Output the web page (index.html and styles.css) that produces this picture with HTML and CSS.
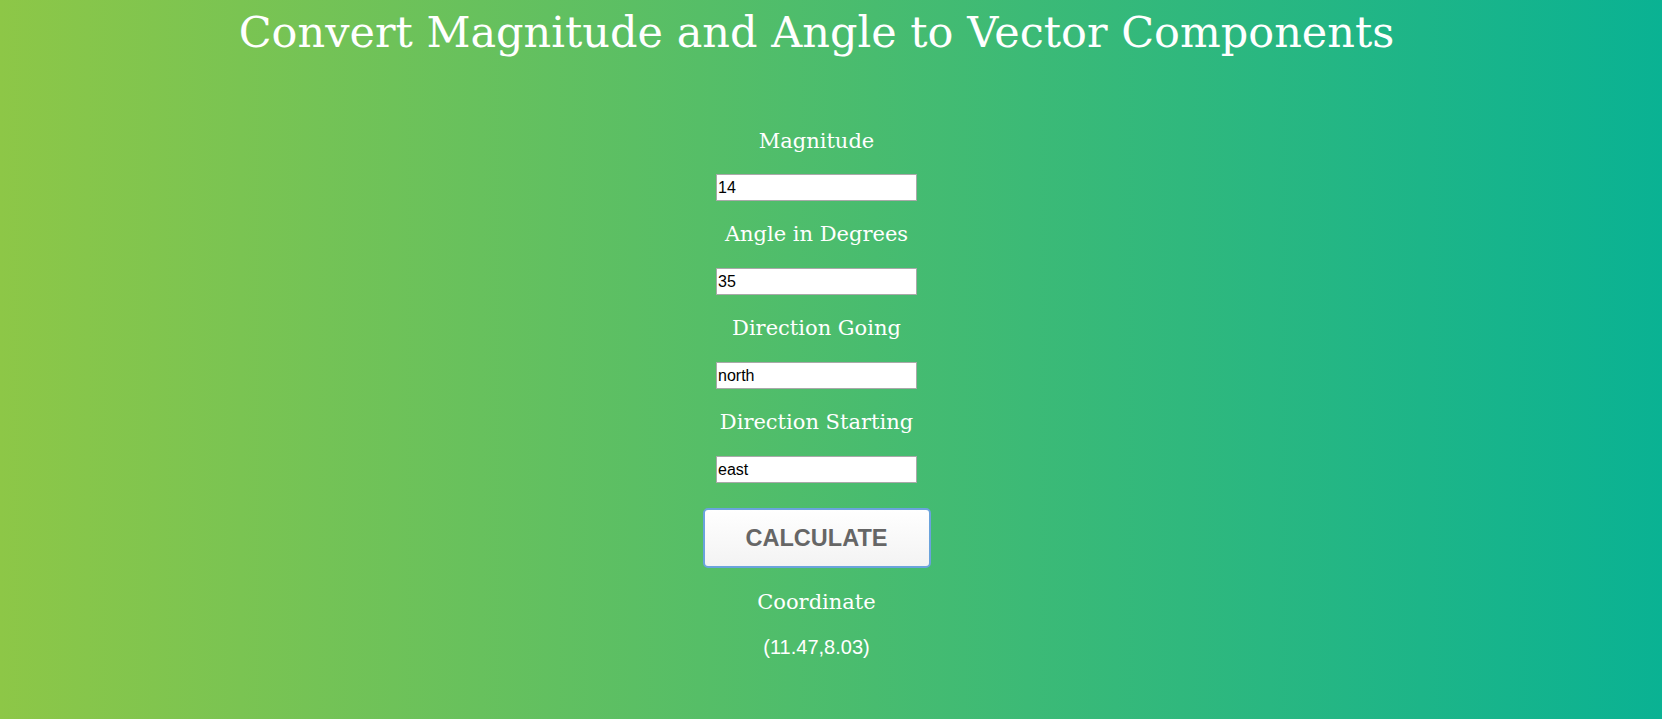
FILE: index.html
```html
<!DOCTYPE html>
<html lang="en">
<head>
<meta charset="utf-8">
<title>Convert Magnitude and Angle to Vector Components</title>
<link rel="stylesheet" href="styles.css">
</head>
<body>
<main class="page">
  <h1 class="title">Convert Magnitude and Angle to Vector Components</h1>
  <form class="form">
    <label class="label" for="mag">Magnitude</label>
    <input class="field" id="mag" type="text" value="14">
    <label class="label" for="ang">Angle in Degrees</label>
    <input class="field" id="ang" type="text" value="35">
    <label class="label" for="going">Direction Going</label>
    <input class="field" id="going" type="text" value="north">
    <label class="label" for="start">Direction Starting</label>
    <input class="field" id="start" type="text" value="east">
    <button class="btn" type="button">CALCULATE</button>
    <div class="label result-label">Coordinate</div>
    <div class="result">(11.47,8.03)</div>
  </form>
</main>
</body>
</html>
```
FILE: styles.css
```css
html, body {
  margin: 0;
  padding: 0;
}
body {
  min-height: 100vh;
  background: linear-gradient(to right, #8dc747, #0ab293);
  color: #fff;
  font-family: "DejaVu Serif", serif;
}
.page {
  display: flex;
  flex-direction: column;
  align-items: center;
  padding-right: 29px;
  min-height: 100vh;
  box-sizing: border-box;
}
.title {
  margin: 0 0 45px 0;
  padding-top: 2px;
  font-size: 43px;
  line-height: 60px;
  font-weight: normal;
  white-space: nowrap;
}
.form {
  display: flex;
  flex-direction: column;
  align-items: center;
}
.label {
  display: block;
  margin: 20px 0;
  font-size: 21px;
  line-height: 27px;
}
.form > .label:first-child {
  margin-top: 21px;
  margin-bottom: 19px;
}
.field {
  box-sizing: border-box;
  width: 201px;
  height: 27px;
  margin: 0;
  padding: 1px 1px;
  border: 1px solid #a9a9a9;
  background: #fff;
  color: #000;
  font-family: "Liberation Sans", Arial, sans-serif;
  font-size: 16px;
}
.btn {
  box-sizing: border-box;
  width: 228px;
  height: 60px;
  margin-top: 25px;
  border: 2px solid #6aa3dc;
  border-radius: 5px;
  background: linear-gradient(#ffffff, #f3f3f3);
  color: #666;
  font-family: "Liberation Sans", Arial, sans-serif;
  font-weight: bold;
  font-size: 23.5px;
}
.result-label {
  margin: 21px 0 0 0;
}
.result {
  margin-top: 18px;
  font-family: "Liberation Sans", Arial, sans-serif;
  font-size: 20px;
  line-height: 27px;
}
```
